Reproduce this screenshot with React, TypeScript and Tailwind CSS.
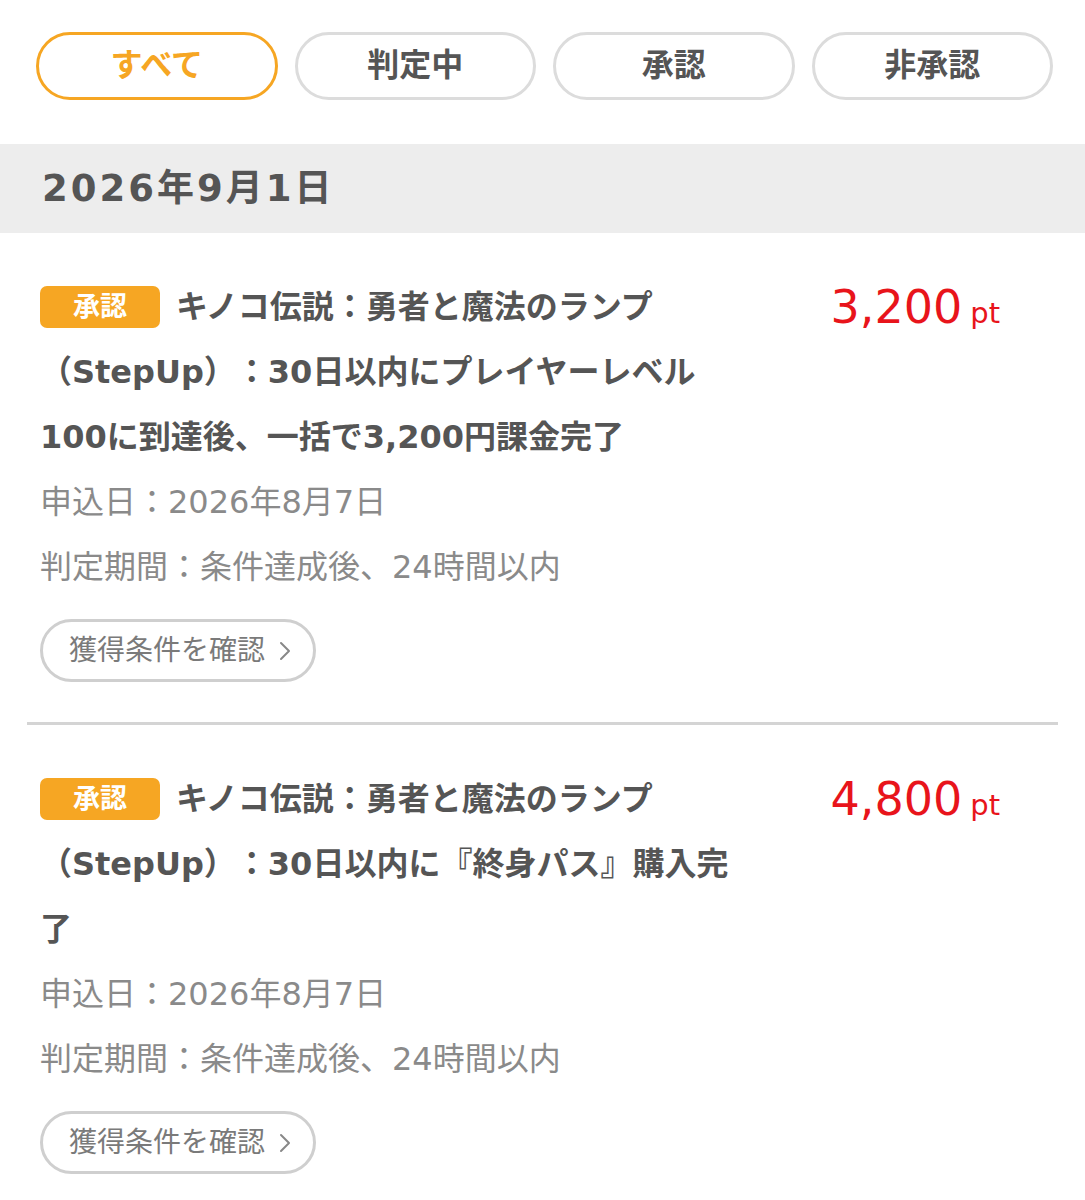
import React from 'react';

// latin glyphs from DejaVu (closer to the wide Hiragino latin), Japanese from Noto CJK
const FONT = { fontFamily: '"DejaVu Sans", "Noto Sans CJK JP", sans-serif' };

const tabs = ['すべて', '判定中', '承認', '非承認'];

interface Item {
  title: string;
  points: string;
  applied: string;
  period: string;
}

const items: Item[] = [
  {
    title: 'キノコ伝説：勇者と魔法のランプ（StepUp）：30日以内にプレイヤーレベル100に到達後、一括で3,200円課金完了',
    points: '3,200',
    applied: '申込日：2026年8月7日',
    period: '判定期間：条件達成後、24時間以内',
  },
  {
    title: 'キノコ伝説：勇者と魔法のランプ（StepUp）：30日以内に『終身パス』購入完了',
    points: '4,800',
    applied: '申込日：2026年8月7日',
    period: '判定期間：条件達成後、24時間以内',
  },
];

const Chevron = () => (
  <svg width="12" height="20" viewBox="0 0 12 20" fill="none">
    <polyline points="2,2 10,10 2,18" stroke="#888" strokeWidth="2" strokeLinecap="round" strokeLinejoin="round" />
  </svg>
);

const RewardRow: React.FC<{ item: Item; last?: boolean }> = ({ item, last }) => {
  return (
    <div className="px-[27px]">
      <div className={`pt-[42px] pb-[40px] ${last ? '' : 'border-b-[3px] border-[#d4d4d4]'}`}>
        <div className="flex px-[13px]">
          <div className="w-[705px] text-[32px] leading-[65px] font-semibold text-[#555] [text-spacing-trim:space-all]">
            <span className="float-left mt-[11px] h-[42px] leading-[42px] px-[33px] mr-[16px] rounded-[7px] bg-[#f6a623] text-white text-[27px] font-bold">
              承認
            </span>
            <span>{item.title}</span>
          </div>
          <div className="flex-1 text-right pr-[45px] leading-[65px] text-[#e8141b] whitespace-nowrap">
            <span className="text-[46px]">{item.points}</span>
            <span className="text-[29px] ml-[8px]">pt</span>
          </div>
        </div>
        <div className="px-[13px] text-[32px] leading-[65px] text-[#8a8a8a] [text-spacing-trim:space-all]">
          <div>{item.applied}</div>
          <div>{item.period}</div>
        </div>
        <div className="px-[13px] mt-[19px]">
          <div className="inline-flex items-center gap-[14px] h-[63px] pl-[26px] pr-[22px] rounded-full border-[3px] border-[#cfcfcf] text-[28px] text-[#7a7a7a]">
            <span>獲得条件を確認</span>
            <Chevron />
          </div>
        </div>
      </div>
    </div>
  );
};

export default function App() {
  return (
    <div className="w-[1085px] min-h-[1200px] bg-white" style={FONT}>
      <div className="grid grid-cols-4 gap-[17px] pl-[36px] pr-[32px] pt-[32px]">
        {tabs.map((t, i) => (
          <div
            key={t}
            className={`h-[68px] rounded-full flex items-center justify-center text-[32px] font-bold border-[3px] ${
              i === 0 ? 'border-[#f6a623] text-[#f6a623]' : 'border-[#dcdcdc] text-[#555]'
            }`}
          >
            <span className="-mt-[3px]">{t}</span>
          </div>
        ))}
      </div>
      <div className="mt-[44px] h-[89px] bg-[#ededed] flex items-center px-[42px]">
        <span className="text-[37px] font-bold tracking-[3px] text-[#555]">2026年9月1日</span>
      </div>
      {items.map((it, i) => (
        <RewardRow key={i} item={it} last={i === items.length - 1} />
      ))}
    </div>
  );
}
